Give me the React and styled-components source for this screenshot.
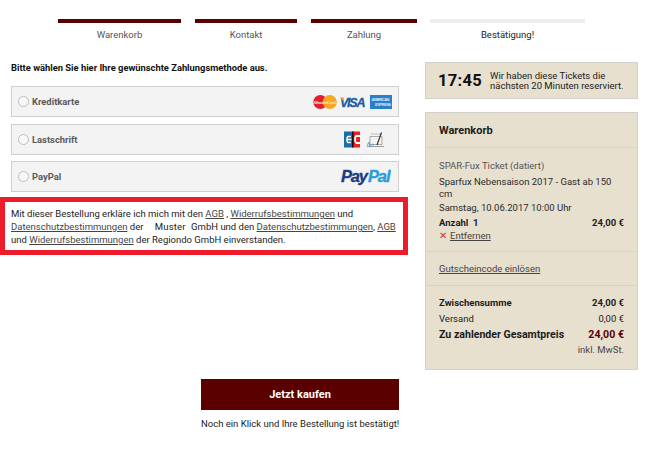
import React from "react";
import styled, { createGlobalStyle } from "styled-components";

const Global = createGlobalStyle`
  html, body { margin: 0; padding: 0; background: #fff; }
  body { font-family: Roboto, "Liberation Sans", sans-serif; font-size: 9.5px; color: #1c1c1c; }
  * { box-sizing: border-box; }
`;

const Page = styled.div`
  width: 649px;
  height: 450px;
  overflow: hidden;
  padding-top: 19px;
`;

const Steps = styled.div`
  display: flex;
  padding-left: 58px;
`;

const Step = styled.div`
  width: ${(p) => p.$w}px;
  margin-right: ${(p) => p.$gap}px;
  border-top: 4px solid ${(p) => (p.$active ? "#5a0000" : "#eeeeee")};
  padding-top: 6px;
  text-align: center;
  font-size: 9.5px;
  line-height: 12px;
  color: ${(p) => (p.$active ? "#555" : "#1c1c1c")};
`;

const Columns = styled.div`
  display: flex;
  align-items: flex-start;
  margin-top: 17px;
`;

const Main = styled.div`
  width: 408px;
`;

const Heading = styled.div`
  margin: 4px 0 0 11px;
  font-size: 9.35px;
  line-height: 12px;
  font-weight: 700;
  color: #111;
`;

const Methods = styled.div`
  display: flex;
  flex-direction: column;
  margin: 12px 9px 0 11px;
`;

const Method = styled.div`
  display: flex;
  align-items: center;
  height: 31px;
  margin-bottom: ${(p) => p.$mb}px;
  padding: 0 6px 0 6px;
  background: #f3f3f3;
  border: 1px solid #cfcfcf;
`;

const Radio = styled.span`
  width: 11px;
  height: 11px;
  border-radius: 50%;
  border: 1px solid #bdbdbd;
  background: #f8f8f8;
  margin-right: 3px;
`;

const MethodName = styled.span`
  flex: 1;
  font-weight: 700;
  font-size: 9.4px;
  color: #5a5a5a;
`;

const Legal = styled.div`
  width: 408px;
  height: 58px;
  margin-top: 5px;
  border: 5px solid #ed1c2a;
  padding: 5px 0 0 6px;
  font-size: 9.5px;
  line-height: 13px;
  color: #1c1c1c;
  white-space: nowrap;
`;

const TextLink = styled.a`
  color: #444;
  text-decoration: underline;
  text-underline-offset: 1px;
`;

const Spaced = styled.span`
  margin: 0 3px 0 9px;
  letter-spacing: 0.2px;
`;

const Buy = styled.div`
  width: 198px;
  margin: 124px 0 0 201px;
  text-align: center;
`;

const BuyButton = styled.button`
  display: block;
  width: 198px;
  height: 31px;
  border: 0;
  background: #5a0000;
  color: #fff;
  font-family: inherit;
  font-weight: 700;
  font-size: 11px;
`;

const BuyNote = styled.div`
  margin-top: 8px;
  font-size: 9.5px;
  line-height: 12px;
  white-space: nowrap;
`;

const Side = styled.div`
  width: 213px;
  margin-left: 17px;
  margin-top: 4px;
`;

const Timer = styled.div`
  display: flex;
  align-items: center;
  height: 37px;
  background: #e7e0cf;
  border: 1px solid #d2d0c8;
  padding: 0 0 0 12px;
`;

const Clock = styled.div`
  font-size: 16.5px;
  font-weight: 700;
  letter-spacing: 0.3px;
  color: #111;
  margin-right: 8px;
`;

const TimerText = styled.div`
  font-size: 9.5px;
  line-height: 10px;
  margin-top: 1px;
  white-space: nowrap;
`;

const Cart = styled.div`
  height: 258px;
  margin-top: 13px;
  background: #e7e0cf;
  border: 1px solid #d2d0c8;
`;

const CartSection = styled.div`
  height: ${(p) => p.$h}px;
  padding: ${(p) => p.$pt}px 13px 0 13px;
  border-bottom: ${(p) => (p.$line ? "1px solid #d3d2cc" : "0")};
`;

const CartTitle = styled.div`
  font-size: 11px;
  line-height: 14px;
  font-weight: 700;
  color: #222;
`;

const Line = styled.div`
  font-size: 9.5px;
  line-height: ${(p) => p.$lh || 13}px;
  margin-top: ${(p) => p.$mt || 0}px;
  color: ${(p) => p.$color || "#2a2a2a"};
  font-weight: ${(p) => (p.$bold ? 700 : 400)};
`;

const Row = styled.div`
  display: flex;
  justify-content: space-between;
  font-size: ${(p) => p.$size || 9.5}px;
  line-height: ${(p) => p.$lh || 13}px;
  margin-top: ${(p) => p.$mt || 0}px;
  font-weight: ${(p) => (p.$bold ? 700 : 400)};
  color: #1c1c1c;
`;

const Total = styled.span`
  color: #5a0000;
`;

const Cross = styled.span`
  color: #d8302a;
  margin-right: 3px;
`;

const Tax = styled.div`
  text-align: right;
  font-size: 9.5px;
  line-height: 13px;
  margin-top: 1px;
  color: #444;
`;

const LogoRow = styled.span`
  display: flex;
  align-items: center;
  margin-right: ${(p) => p.$mr || 0}px;
`;

const logoFont = "'Liberation Sans', sans-serif";

const CardLogos = () => (
  <LogoRow>
    <svg width="80" height="16" viewBox="0 0 80 16">
      <circle cx="8.3" cy="8" r="7" fill="#e21f2d" />
      <circle cx="17.8" cy="8" r="7" fill="#f7a823" />
      <text x="2" y="9.6" fontFamily={logoFont} fontSize="4.4" fontWeight="700" fontStyle="italic" fill="#f6e3cf" textLength="22">MasterCard</text>
      <text x="28" y="12.8" fontFamily={logoFont} fontSize="12.5" fontWeight="700" fontStyle="italic" fill="#1a5c9e" stroke="#1a5c9e" strokeWidth=".3" textLength="25.5">VISA</text>
      <path d="M28 3.5h3l1 4z" fill="#f0a830" />
      <rect x="58" y="1" width="22" height="14" fill="#2a7fc6" />
      <text x="59.5" y="6.6" fontFamily={logoFont} fontSize="4" fontWeight="700" fill="#dcebf7" textLength="18">AMERICAN</text>
      <text x="63" y="11.8" fontFamily={logoFont} fontSize="4" fontWeight="700" fill="#dcebf7" textLength="16">EXPRESS</text>
    </svg>
  </LogoRow>
);

const BankLogos = () => (
  <LogoRow $mr={7}>
    <svg width="41" height="17" viewBox="0 0 41 17">
      <rect x="0" y="0.5" width="8.5" height="16" fill="#1a6ea8" />
      <rect x="8.5" y="0.5" width="7.5" height="16" fill="#ed2024" />
      <path d="M3 8.5h4.5M7 5.5H4.2a1.2 3 0 0 0 0 6H7" fill="none" stroke="#fff" strokeWidth="1.6" />
      <path d="M16 5H12.5a1.4 3.5 0 0 0 0 7H16" fill="none" stroke="#fff" strokeWidth="1.8" />
      <rect x="8" y="0.5" width="1.6" height="16" fill="#12131a" />
      <path d="M26 5.5h12v8h-12z" fill="none" stroke="#a9a9a9" />
      <path d="M27 3h11" stroke="#bbb" />
      <path d="M37.5 1.5 L33 14" stroke="#333" strokeWidth="1.2" />
      <path d="M23 15.5h17" stroke="#9a9a9a" />
      <path d="M23.5 14.5c1-4 2-4 2-1s2 1 2.5 0 1 1 2 0" fill="none" stroke="#3f8fd0" />
    </svg>
  </LogoRow>
);

const PayPalLogo = () => (
  <LogoRow $mr={1}>
    <svg width="51" height="18" viewBox="0 0 51 18">
      <text x="1" y="14" fontFamily={logoFont} fontSize="16.5" fontWeight="700" fontStyle="italic" fill="#1b3b85" stroke="#1b3b85" strokeWidth=".35" textLength="27">Pay</text>
      <text x="28" y="14" fontFamily={logoFont} fontSize="16.5" fontWeight="700" fontStyle="italic" fill="#2a9bdc" stroke="#2a9bdc" strokeWidth=".35" textLength="22.5">Pal</text>
    </svg>
  </LogoRow>
);

export default function App() {
  return (
    <Page>
      <Global />
      <Steps>
        <Step $active $w={123} $gap={14}>Warenkorb</Step>
        <Step $active $w={102} $gap={14}>Kontakt</Step>
        <Step $active $w={106} $gap={13}>Zahlung</Step>
        <Step $w={155} $gap={0}>Bestätigung!</Step>
      </Steps>
      <Columns>
        <Main>
          <Heading>Bitte wählen Sie hier Ihre gewünschte Zahlungsmethode aus.</Heading>
          <Methods>
            <Method $mb={7}>
              <Radio />
              <MethodName>Kreditkarte</MethodName>
              <CardLogos />
            </Method>
            <Method $mb={6}>
              <Radio />
              <MethodName>Lastschrift</MethodName>
              <BankLogos />
            </Method>
            <Method $mb={0}>
              <Radio />
              <MethodName>PayPal</MethodName>
              <PayPalLogo />
            </Method>
          </Methods>
          <Legal>
            Mit dieser Bestellung erkläre ich mich mit den <TextLink>AGB</TextLink> , <TextLink>Widerrufsbestimmungen</TextLink> und
            <br />
            <TextLink>Datenschutzbestimmungen</TextLink> der <Spaced>Muster</Spaced> GmbH und den <TextLink>Datenschutzbestimmungen</TextLink>, <TextLink>AGB</TextLink>
            <br />
            und <TextLink>Widerrufsbestimmungen</TextLink> der Regiondo GmbH einverstanden.
          </Legal>
          <Buy>
            <BuyButton>Jetzt kaufen</BuyButton>
            <BuyNote>Noch ein Klick und Ihre Bestellung ist bestätigt!</BuyNote>
          </Buy>
        </Main>
        <Side>
          <Timer>
            <Clock>17:45</Clock>
            <TimerText>
              Wir haben diese Tickets die
              <br />
              nächsten 20 Minuten reserviert.
            </TimerText>
          </Timer>
          <Cart>
            <CartSection $h={35} $pt={11} $line>
              <CartTitle>Warenkorb</CartTitle>
            </CartSection>
            <CartSection $h={104} $pt={11} $line>
              <Line $color="#555" $lh={14}>SPAR-Fux Ticket (datiert)</Line>
              <Line $lh={12} $mt={3}>Sparfux Nebensaison 2017 - Gast ab 150</Line>
              <Line $lh={12}>cm</Line>
              <Line $lh={14} $mt={1}>Samstag, 10.06.2017 10:00 Uhr</Line>
              <Row $bold $mt={1}>
                <span>Anzahl&nbsp;&nbsp;1</span>
                <span>24,00 €</span>
              </Row>
              <Line $lh={12} $mt={1}>
                <Cross>✕</Cross>
                <TextLink>Entfernen</TextLink>
              </Line>
            </CartSection>
            <CartSection $h={34} $pt={11} $line>
              <TextLink>Gutscheincode einlösen</TextLink>
            </CartSection>
            <CartSection $h={83} $pt={10}>
              <Row $bold>
                <span>Zwischensumme</span>
                <span>24,00 €</span>
              </Row>
              <Row $mt={3}>
                <span>Versand</span>
                <span>0,00 €</span>
              </Row>
              <Row $bold $size={10.6} $lh={14} $mt={3}>
                <span>Zu zahlender Gesamtpreis</span>
                <Total>24,00 €</Total>
              </Row>
              <Tax>inkl. MwSt.</Tax>
            </CartSection>
          </Cart>
        </Side>
      </Columns>
    </Page>
  );
}
